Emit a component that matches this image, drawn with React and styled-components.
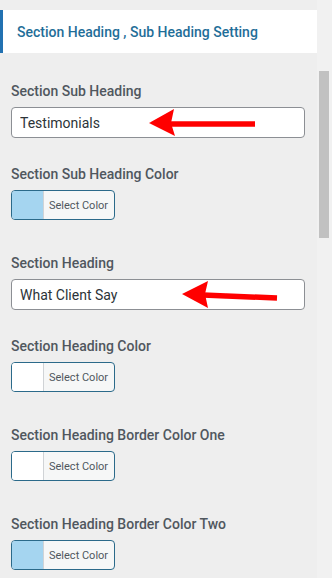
import React from 'react'
import styled, { createGlobalStyle } from 'styled-components'

const GlobalStyle = createGlobalStyle`
  body {
    margin: 0;
    background: #eeeeee;
    font-family: Roboto, "Liberation Sans", sans-serif;
  }
`;

// the fields shown in the settings panel, top to bottom
const fields = [
  { type: 'text', label: 'Section Sub Heading', value: 'Testimonials', arrow: 'one' },
  { type: 'color', label: 'Section Sub Heading Color', color: '#a5d5f0' },
  { type: 'text', label: 'Section Heading', value: 'What Client Say', arrow: 'two' },
  { type: 'color', label: 'Section Heading Color', color: '#ffffff' },
  { type: 'color', label: 'Section Heading Border Color One', color: '#ffffff' },
  { type: 'color', label: 'Section Heading Border Color Two', color: '#a5d5f0' },
];

// red pointer arrows drawn over the text inputs
function ArrowOne() {
  return (
    <ArrowMark $left={137} width="112" height="30" viewBox="0 0 112 30">
      <line x1="22" y1="17" x2="107" y2="17" stroke="#ff0000" strokeWidth="5.5" />
      <polygon points="1,16 26,2 23,16 27,29" fill="#ff0000" />
    </ArrowMark>
  )
}

function ArrowTwo() {
  return (
    <ArrowMark $left={170} width="100" height="30" viewBox="0 0 100 30">
      <line x1="22" y1="16" x2="96" y2="19" stroke="#ff0000" strokeWidth="5.5" />
      <polygon points="1,15 27,2 24,15 27,29" fill="#ff0000" />
    </ArrowMark>
  )
}

function App() {
  return (
    <>
      <GlobalStyle />
      <Page>
        <Main>
          <SectionTitle>Section Heading , Sub Heading Setting</SectionTitle>
          <Form>
            {fields.map((field, i) => (
              <Field key={i} $gap={field.type === 'color' ? 33 : 26}>
                <Label>{field.label}</Label>
                {field.type === 'text' ? (
                  <InputWrap>
                    <TextInput defaultValue={field.value} />
                    {field.arrow === 'one' && <ArrowOne />}
                    {field.arrow === 'two' && <ArrowTwo />}
                  </InputWrap>
                ) : (
                  <ColorButton type="button">
                    <Swatch $color={field.color} />
                    <ButtonText>Select Color</ButtonText>
                  </ColorButton>
                )}
              </Field>
            ))}
          </Form>
        </Main>
        <Track>
          <Thumb />
        </Track>
      </Page>
    </>
  )
}

export default App

const Page = styled.div`
  display: flex;
  width: 332px;
  height: 578px;
  overflow: hidden;
`;

const Main = styled.div`
  flex: 1;
  padding-top: 10px;
`;

const SectionTitle = styled.div`
  display: flex;
  align-items: center;
  height: 43px;
  background: #ffffff;
  border-left: 3px solid #2271b1;
  padding-left: 14px;
  font-size: 14px;
  font-weight: 500;
  color: #1f6e98;
`;

const Form = styled.div`
  padding: 28px 12px 0 11px;
`;

const Field = styled.div`
  margin-bottom: ${(p) => p.$gap}px;
`;

const Label = styled.label`
  display: block;
  font-size: 14px;
  line-height: 20px;
  font-weight: 500;
  color: #50575e;
  margin-bottom: 6px;
`;

const InputWrap = styled.div`
  position: relative;
`;

const TextInput = styled.input`
  box-sizing: border-box;
  display: block;
  width: 100%;
  height: 31px;
  padding: 0 8px;
  border: 1px solid #8c8f94;
  border-radius: 4px;
  background: #ffffff;
  font-family: Roboto, "Liberation Sans", sans-serif;
  font-size: 14px;
  color: #2c3338;
  outline: none;
`;

const ArrowMark = styled.svg`
  position: absolute;
  top: 0;
  left: ${(p) => p.$left}px;
`;

const ColorButton = styled.button`
  box-sizing: border-box;
  display: flex;
  align-items: stretch;
  width: 104px;
  height: 30px;
  padding: 0;
  border: 1px solid #2b6a8a;
  border-radius: 4px;
  background: #f6f7f7;
  overflow: hidden;
  cursor: pointer;
`;

const Swatch = styled.span`
  width: 31px;
  background: ${(p) => p.$color};
  border-right: 1px solid #d0d3d6;
`;

const ButtonText = styled.span`
  display: flex;
  align-items: center;
  padding-left: 5px;
  font-family: Roboto, "Liberation Sans", sans-serif;
  font-size: 11px;
  color: #50575e;
`;

const Track = styled.div`
  flex: none;
  width: 15px;
  background: #f1f1f1;
`;

const Thumb = styled.div`
  width: 10px;
  height: 167px;
  margin: 71px 0 0 2px;
  background: #c1c1c1;
`;
